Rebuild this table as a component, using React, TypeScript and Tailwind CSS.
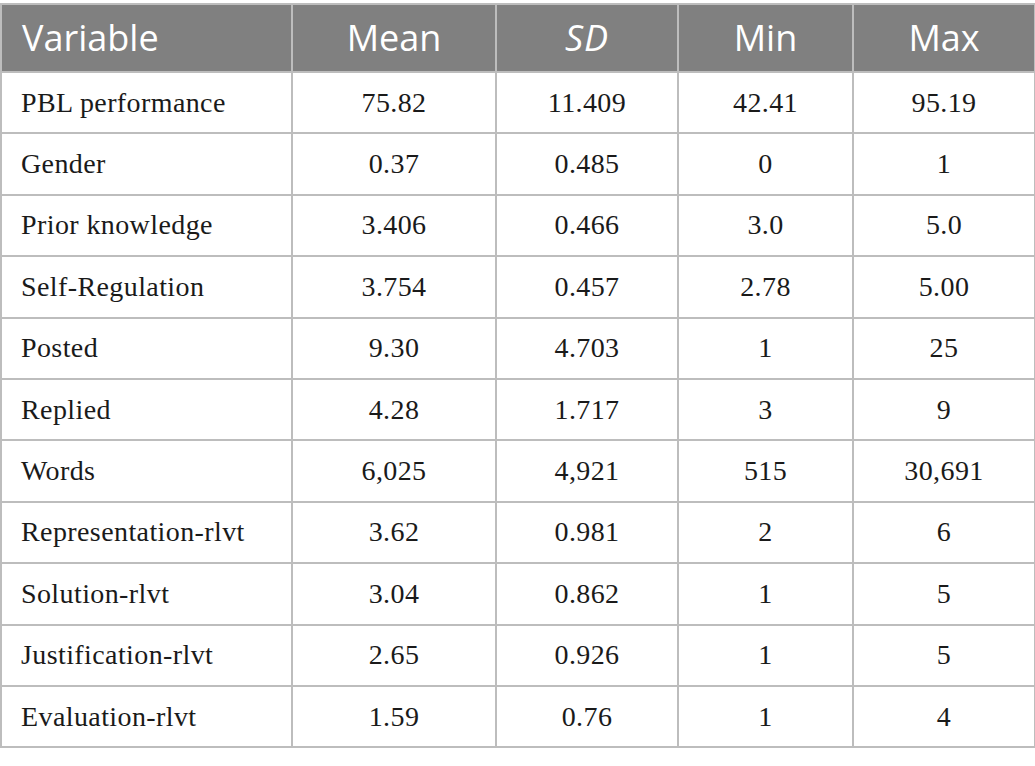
import React from "react";

const rows: string[][] = [
    ["PBL performance", "75.82", "11.409", "42.41", "95.19"],
    ["Gender", "0.37", "0.485", "0", "1"],
    ["Prior knowledge", "3.406", "0.466", "3.0", "5.0"],
    ["Self-Regulation", "3.754", "0.457", "2.78", "5.00"],
    ["Posted", "9.30", "4.703", "1", "25"],
    ["Replied", "4.28", "1.717", "3", "9"],
    ["Words", "6,025", "4,921", "515", "30,691"],
    ["Representation-rlvt", "3.62", "0.981", "2", "6"],
    ["Solution-rlvt", "3.04", "0.862", "1", "5"],
    ["Justification-rlvt", "2.65", "0.926", "1", "5"],
    ["Evaluation-rlvt", "1.59", "0.76", "1", "4"],
];

function App() {
    return (
        <main className="min-h-[766px] w-[1035px] bg-white pt-[3px]">
            <table className="w-[1034px] table-fixed border-collapse">
                <colgroup>
                    <col className="w-[291px]" />
                    <col className="w-[204px]" />
                    <col className="w-[182px]" />
                    <col className="w-[175px]" />
                    <col className="w-[182px]" />
                </colgroup>
                <thead>
                    <tr className="h-[68px] bg-[#808080] font-['Open_Sans',sans-serif] text-[36px] text-white">
                        <th className="border-2 border-[#bdbdbd] pl-[20px] text-left font-normal">Variable</th>
                        <th className="border-2 border-[#bdbdbd] text-center font-normal">Mean</th>
                        <th className="border-2 border-[#bdbdbd] text-center font-normal italic tracking-[1px]">SD</th>
                        <th className="border-2 border-[#bdbdbd] text-center font-normal">Min</th>
                        <th className="border-2 border-[#bdbdbd] text-center font-normal">Max</th>
                    </tr>
                </thead>
                <tbody className="font-['Liberation_Serif',serif] text-[28px] tracking-[0.4px] text-[#1a1a1a]">
                    {rows.map((row, index) => (
                        <tr key={index} className="h-[61.4px]">
                            {row.map((cell, i) => (
                                <td
                                    key={i}
                                    className={`border-2 border-[#bdbdbd] ${
                                        i == 0 ? "pl-[19px] text-left" : "text-center"
                                    }`}>
                                    {cell}
                                </td>
                            ))}
                        </tr>
                    ))}
                </tbody>
            </table>
        </main>
    );
}

export default App;
